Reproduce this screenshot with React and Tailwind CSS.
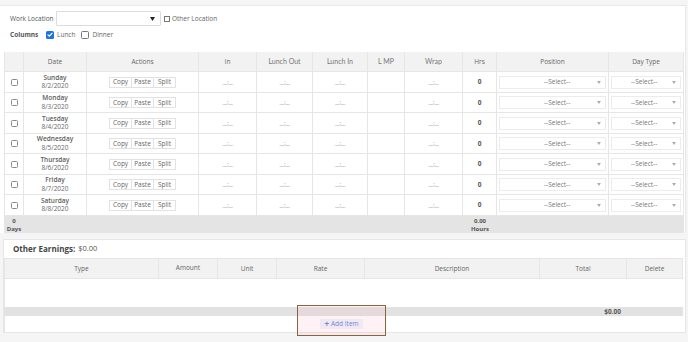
import React from "react";

const days = [
  ["Sunday", "8/2/2020"],
  ["Monday", "8/3/2020"],
  ["Tuesday", "8/4/2020"],
  ["Wednesday", "8/5/2020"],
  ["Thursday", "8/6/2020"],
  ["Friday", "8/7/2020"],
  ["Saturday", "8/8/2020"],
];

const GRID = "grid grid-cols-[20px_63px_112px_58px_56px_55px_37px_58px_34px_112px_75px]";
const EGRID = "grid grid-cols-[155px_59px_59px_88px_175px_87px_56px]";

function Caret({ className }) {
  return (
    <svg width="5" height="4" viewBox="0 0 5 4" className={className}>
      <path d="M0 0 L5 0 L2.5 4 Z" fill="currentColor" />
    </svg>
  );
}

function Box() {
  return <div className="w-[7px] h-[7px] border border-[#8a8a8a] rounded-[1.5px] bg-white" />;
}

function Cell({ children, className = "" }) {
  return (
    <div className={"border-r border-b border-[#e6e6e6] flex items-center justify-center " + className}>
      {children}
    </div>
  );
}

function Time() {
  return <span className="text-[6px] text-[#8a8a8a] tracking-[-0.4px]">__:__</span>;
}

function Select({ w, textPos }) {
  return (
    <div className={"h-[13px] border border-[#ececec] bg-white relative flex items-center " + w}>
      <span className={"text-[6.5px] text-[#777] absolute " + textPos}>--Select--</span>
      <Caret className="absolute right-[4px] text-[#aaa] w-[4px] h-[3px]" />
    </div>
  );
}

export default function App() {
  return (
    <div className="w-[688px] h-[342px] overflow-hidden bg-[#f5f5f5] relative font-['Open_Sans',sans-serif] text-[#555]">
      <div className="h-[5px]" />
      <div className="w-[686px] bg-white border-t border-r border-[#e8e8e8]">
        {/* Work location row */}
        <div className="mt-[5px] h-[15px] flex items-center pl-[10px]">
          <span className="text-[6.5px] text-[#555] w-[46px]">Work Location</span>
          <div className="w-[105px] h-[15px] border border-[#dcdcdc] rounded-[1px] bg-white relative flex items-center">
            <Caret className="absolute right-[5px] text-[#222]" />
          </div>
          <div className="ml-[3px] w-[6px] h-[6px] border border-[#777] bg-white" />
          <span className="ml-[2px] text-[6.5px] text-[#666]">Other Location</span>
        </div>
        {/* Columns row */}
        <div className="mt-[3px] h-[11px] flex items-center pl-[10px]">
          <span className="text-[6.5px] font-bold text-[#555] w-[36px]">Columns</span>
          <div className="w-[8px] h-[8px] rounded-[1.5px] bg-[#1d72e8] flex items-center justify-center">
            <svg width="6" height="5" viewBox="0 0 6 5">
              <path d="M0.6 2.6 L2.3 4.1 L5.4 0.8" stroke="white" strokeWidth="1.2" fill="none" />
            </svg>
          </div>
          <span className="ml-[3px] text-[6.5px] text-[#666]">Lunch</span>
          <div className="ml-[6px] w-[8px] h-[8px] rounded-[1.5px] border border-[#777] bg-white" />
          <span className="ml-[3px] text-[6.5px] text-[#666]">Dinner</span>
        </div>

        {/* Main table */}
        <div className="mt-[12px] ml-[4px] w-[680px]">
          <div className={GRID + " h-[20px] bg-[#f2f2f2] text-[6.5px] text-[#666]"}>
            <Cell className="border-l" />
            <Cell>Date</Cell>
            <Cell>Actions</Cell>
            <Cell>In</Cell>
            <Cell className="font-['Lato',sans-serif] text-[7px] text-[#777]">Lunch Out</Cell>
            <Cell className="font-['Lato',sans-serif] text-[7px] text-[#777]">Lunch In</Cell>
            <Cell className="font-['Lato',sans-serif] text-[7px] text-[#777]">L MP</Cell>
            <Cell className="font-['Lato',sans-serif] text-[7px] text-[#777]">Wrap</Cell>
            <Cell>Hrs</Cell>
            <Cell>Position</Cell>
            <Cell>Day Type</Cell>
          </div>
          {days.map(([d, dt], i) => (
            <div key={d} className={GRID + " " + (i % 2 === 0 ? "h-[21px]" : "h-[20px]")}>
              <Cell className="border-l"><Box /></Cell>
              <Cell className="flex-col leading-[8.5px]">
                <span className="text-[6.5px] font-semibold text-[#5c5c5c]">{d}</span>
                <span className="text-[6.5px] text-[#6a6a6a]">{dt}</span>
              </Cell>
              <Cell>
                <div className="flex h-[11px] border border-[#e2e2e2] bg-white text-[6.5px] text-[#666]">
                  <span className="w-[22px] flex items-center justify-center border-r border-[#e2e2e2]">Copy</span>
                  <span className="w-[22px] flex items-center justify-center border-r border-[#e2e2e2]">Paste</span>
                  <span className="w-[21px] flex items-center justify-center">Split</span>
                </div>
              </Cell>
              <Cell><Time /></Cell>
              <Cell><Time /></Cell>
              <Cell><Time /></Cell>
              <Cell />
              <Cell><Time /></Cell>
              <Cell><span className="text-[6.5px] font-bold text-[#555]">0</span></Cell>
              <Cell><Select w="w-[107px]" textPos="left-[44px]" /></Cell>
              <Cell><Select w="w-[70px]" textPos="left-[19px]" /></Cell>
            </div>
          ))}
          <div className={GRID + " h-[17px] bg-[#e4e4e4]"}>
            <div className="flex flex-col items-center justify-center leading-[8px] text-[6px] font-bold text-[#555]">
              <span>0</span>
              <span>Days</span>
            </div>
            <div /><div /><div /><div /><div /><div /><div />
            <div className="flex flex-col items-center justify-center leading-[8px] text-[6px] font-bold text-[#555]">
              <span>0.00</span>
              <span>Hours</span>
            </div>
            <div /><div />
          </div>
        </div>
      </div>

      {/* Other earnings panel */}
      <div className="mt-[6px] ml-[3px] w-[683px] bg-white border border-[#e6e6e6]">
        <div className="h-[18px] flex items-center pl-[9px] gap-[3px]">
          <span className="text-[8px] font-bold text-[#444]">Other Earnings:</span>
          <span className="text-[7.5px] text-[#555]">$0.00</span>
        </div>
        <div className="w-[679px]">
          <div className={EGRID + " h-[21px] bg-[#f2f2f2] text-[6.5px] text-[#666] border-t border-[#e6e6e6]"}>
            <Cell className="border-l">Type</Cell>
            <Cell className="items-start pt-[4px]">Amount</Cell>
            <Cell>Unit</Cell>
            <Cell>Rate</Cell>
            <Cell>Description</Cell>
            <Cell>Total</Cell>
            <Cell>Delete</Cell>
          </div>
          <div className="h-[28px] bg-white border-l border-[#e6e6e6]" />
          <div className={EGRID + " h-[9px] bg-[#e2e2e2]"}>
            <div /><div /><div /><div /><div />
            <div className="flex items-center justify-end pr-[6px] text-[6.5px] font-bold text-[#555]">$0.00</div>
            <div />
          </div>
          <div className="h-[16px] flex items-center justify-center border-l border-[#e6e6e6]">
            <div className="h-[10px] px-[4px] bg-[#eef4fd] flex items-center gap-[2px] text-[6.5px] text-[#5b7fd8] ml-[-5px]">
              <span className="font-bold text-[8px] leading-[8px]">+</span>
              <span>Add Item</span>
            </div>
          </div>
        </div>
      </div>

      {/* annotation highlight */}
      <div className="absolute left-[297px] top-[305px] w-[89px] h-[31px] border-[1.5px] border-[#86643f] bg-[rgba(255,160,185,0.14)] pointer-events-none" />
    </div>
  );
}
